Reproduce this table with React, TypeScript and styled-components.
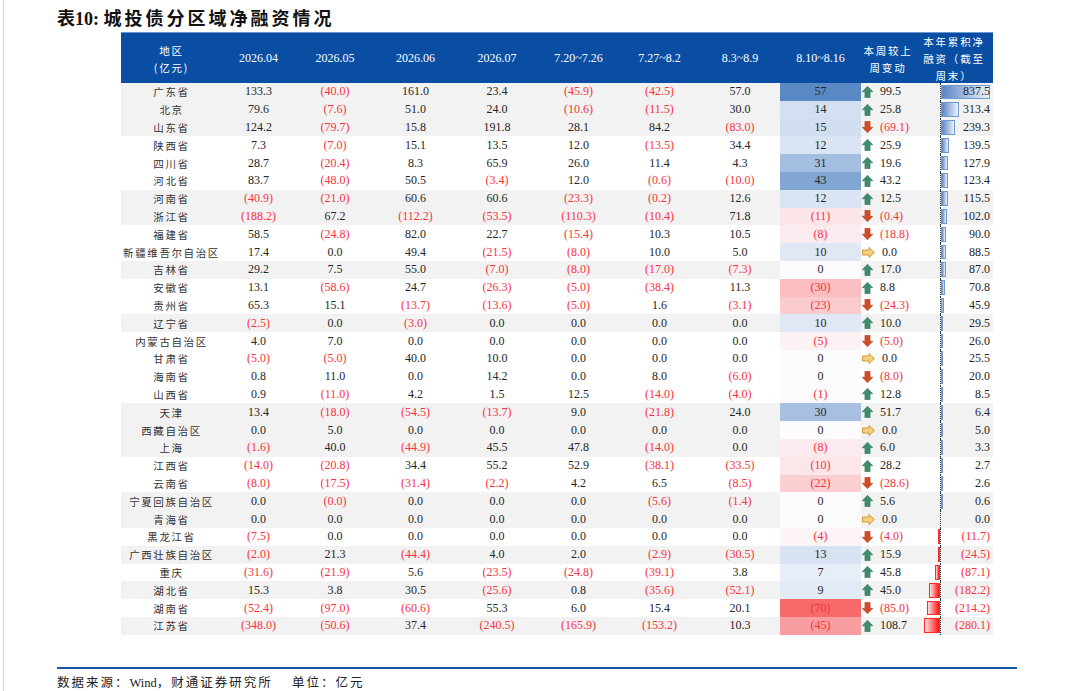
import styled, { createGlobalStyle } from "styled-components";

const GlobalStyle = createGlobalStyle`
  html, body {
    margin: 0;
    padding: 0;
    background: #ffffff;
  }
  body {
    font-family: "Liberation Serif", serif;
  }
`;

const CJK = `"Noto Sans CJK SC", "Liberation Serif", sans-serif`;
const COLS = "101px 73px 80px 81px 82px 81px 81px 80px 81px 54px 78px";

const Page = styled.div`
  width: 1077px;
  height: 691px;
  margin-left: 3px;
  border-left: 1px solid #d6d6d6;
  padding: 5px 0 0 53px;
  box-sizing: border-box;
`;
const Title = styled.h1`
  margin: 0 0 3px;
  height: 24px;
  line-height: 24px;
  font-size: 18px;
  font-weight: bold;
  color: #111111;
  font-family: "Liberation Serif", "Noto Sans CJK SC", serif;

  span {
    font-family: ${CJK};
    letter-spacing: 3px;
  }
`;
const Table = styled.div`
  margin-left: 64px;
  width: 872px;
`;
const HeadRow = styled.div`
  display: grid;
  grid-template-columns: ${COLS};
  height: 51px;
  background: #0a4ea3;
  border-top: 1px solid #6b97d2;
  box-sizing: border-box;
  color: #ffffff;
`;
const HeadCell = styled.div<{ $cjk?: boolean }>`
  display: flex;
  align-items: center;
  justify-content: center;
  text-align: center;
  line-height: 17px;
  font-family: ${(p) => (p.$cjk ? CJK : `"Liberation Serif", serif`)};
  font-size: ${(p) => (p.$cjk ? "10.5px" : "12px")};
  letter-spacing: ${(p) => (p.$cjk ? "1.8px" : "0")};
`;
const Row = styled.div<{ $shade: boolean }>`
  display: grid;
  grid-template-columns: ${COLS};
  height: 17.8px;
  background: ${(p) => (p.$shade ? "#f2f2f2" : "#ffffff")};
`;
const Cell = styled.div<{ $neg?: boolean }>`
  display: flex;
  align-items: center;
  justify-content: center;
  font-size: 12px;
  white-space: nowrap;
  color: ${(p) => (p.$neg ? "#f7323c" : "#262626")};
`;
const Region = styled(Cell)`
  font-family: ${CJK};
  font-size: 10.5px;
  letter-spacing: 1.6px;
  color: #333333;
`;
const ChangeCell = styled.div<{ $neg?: boolean }>`
  display: flex;
  align-items: center;
  gap: 7px;
  padding-left: 1px;
  font-size: 12px;
  white-space: nowrap;
  color: ${(p) => (p.$neg ? "#f7323c" : "#262626")};
`;
const CumCell = styled.div<{ $neg?: boolean }>`
  position: relative;
  display: flex;
  align-items: center;
  justify-content: flex-end;
  padding-right: 3px;
  font-size: 12px;
  color: ${(p) => (p.$neg ? "#f7323c" : "#262626")};

  &::before {
    content: "";
    position: absolute;
    left: 25px;
    top: 0;
    bottom: 0;
    border-left: 1px dotted #333333;
  }
  span {
    position: relative;
  }
`;
const Bar = styled.div<{ $neg: boolean }>`
  position: absolute;
  top: 1.5px;
  bottom: 1.5px;
  box-sizing: border-box;
  ${(p) =>
    p.$neg
      ? `right: 53px;
         background: linear-gradient(to right, #ffe3e3, #ff1010);
         border: 1px solid #ff2a2a;`
      : `left: 26px;
         background: linear-gradient(to right, #5a86c5, #edf2fa);
         border: 1px solid #7099d0;`}
`;
const Footer = styled.div`
  margin-top: 32px;
  width: 960px;
  border-top: 2px solid #1457a8;
  padding-top: 6px;
  font-family: "Liberation Serif", "Noto Sans CJK SC", serif;
  font-size: 12.5px;
  line-height: 14px;
  color: #222222;

  span {
    font-family: ${CJK};
    letter-spacing: 2px;
  }
`;

type Dir = "up" | "down" | "flat";
type RowData = [string, string[], string, string, Dir, string];

const rows: RowData[] = [
  ["广东省", ["133.3", "(40.0)", "161.0", "23.4", "(45.9)", "(42.5)", "57.0"], "57", "99.5", "up", "837.5"],
  ["北京", ["79.6", "(7.6)", "51.0", "24.0", "(10.6)", "(11.5)", "30.0"], "14", "25.8", "up", "313.4"],
  ["山东省", ["124.2", "(79.7)", "15.8", "191.8", "28.1", "84.2", "(83.0)"], "15", "(69.1)", "down", "239.3"],
  ["陕西省", ["7.3", "(7.0)", "15.1", "13.5", "12.0", "(13.5)", "34.4"], "12", "25.9", "up", "139.5"],
  ["四川省", ["28.7", "(20.4)", "8.3", "65.9", "26.0", "11.4", "4.3"], "31", "19.6", "up", "127.9"],
  ["河北省", ["83.7", "(48.0)", "50.5", "(3.4)", "12.0", "(0.6)", "(10.0)"], "43", "43.2", "up", "123.4"],
  ["河南省", ["(40.9)", "(21.0)", "60.6", "60.6", "(23.3)", "(0.2)", "12.6"], "12", "12.5", "up", "115.5"],
  ["浙江省", ["(188.2)", "67.2", "(112.2)", "(53.5)", "(110.3)", "(10.4)", "71.8"], "(11)", "(0.4)", "down", "102.0"],
  ["福建省", ["58.5", "(24.8)", "82.0", "22.7", "(15.4)", "10.3", "10.5"], "(8)", "(18.8)", "down", "90.0"],
  ["新疆维吾尔自治区", ["17.4", "0.0", "49.4", "(21.5)", "(8.0)", "10.0", "5.0"], "10", "0.0", "flat", "88.5"],
  ["吉林省", ["29.2", "7.5", "55.0", "(7.0)", "(8.0)", "(17.0)", "(7.3)"], "0", "17.0", "up", "87.0"],
  ["安徽省", ["13.1", "(58.6)", "24.7", "(26.3)", "(5.0)", "(38.4)", "11.3"], "(30)", "8.8", "up", "70.8"],
  ["贵州省", ["65.3", "15.1", "(13.7)", "(13.6)", "(5.0)", "1.6", "(3.1)"], "(23)", "(24.3)", "down", "45.9"],
  ["辽宁省", ["(2.5)", "0.0", "(3.0)", "0.0", "0.0", "0.0", "0.0"], "10", "10.0", "up", "29.5"],
  ["内蒙古自治区", ["4.0", "7.0", "0.0", "0.0", "0.0", "0.0", "0.0"], "(5)", "(5.0)", "down", "26.0"],
  ["甘肃省", ["(5.0)", "(5.0)", "40.0", "10.0", "0.0", "0.0", "0.0"], "0", "0.0", "flat", "25.5"],
  ["海南省", ["0.8", "11.0", "0.0", "14.2", "0.0", "8.0", "(6.0)"], "0", "(8.0)", "down", "20.0"],
  ["山西省", ["0.9", "(11.0)", "4.2", "1.5", "12.5", "(14.0)", "(4.0)"], "(1)", "12.8", "up", "8.5"],
  ["天津", ["13.4", "(18.0)", "(54.5)", "(13.7)", "9.0", "(21.8)", "24.0"], "30", "51.7", "up", "6.4"],
  ["西藏自治区", ["0.0", "5.0", "0.0", "0.0", "0.0", "0.0", "0.0"], "0", "0.0", "flat", "5.0"],
  ["上海", ["(1.6)", "40.0", "(44.9)", "45.5", "47.8", "(14.0)", "0.0"], "(8)", "6.0", "up", "3.3"],
  ["江西省", ["(14.0)", "(20.8)", "34.4", "55.2", "52.9", "(38.1)", "(33.5)"], "(10)", "28.2", "up", "2.7"],
  ["云南省", ["(8.0)", "(17.5)", "(31.4)", "(2.2)", "4.2", "6.5", "(8.5)"], "(22)", "(28.6)", "down", "2.6"],
  ["宁夏回族自治区", ["0.0", "(0.0)", "0.0", "0.0", "0.0", "(5.6)", "(1.4)"], "0", "5.6", "up", "0.6"],
  ["青海省", ["0.0", "0.0", "0.0", "0.0", "0.0", "0.0", "0.0"], "0", "0.0", "flat", "0.0"],
  ["黑龙江省", ["(7.5)", "0.0", "0.0", "0.0", "0.0", "0.0", "0.0"], "(4)", "(4.0)", "down", "(11.7)"],
  ["广西壮族自治区", ["(2.0)", "21.3", "(44.4)", "4.0", "2.0", "(2.9)", "(30.5)"], "13", "15.9", "up", "(24.5)"],
  ["重庆", ["(31.6)", "(21.9)", "5.6", "(23.5)", "(24.8)", "(39.1)", "3.8"], "7", "45.8", "up", "(87.1)"],
  ["湖北省", ["15.3", "3.8", "30.5", "(25.6)", "0.8", "(35.6)", "(52.1)"], "9", "45.0", "up", "(182.2)"],
  ["湖南省", ["(52.4)", "(97.0)", "(60.6)", "55.3", "6.0", "15.4", "20.1"], "(70)", "(85.0)", "down", "(214.2)"],
  ["江苏省", ["(348.0)", "(50.6)", "37.4", "(240.5)", "(165.9)", "(153.2)", "10.3"], "(45)", "108.7", "up", "(280.1)"],
];

const SHADE = "GGGWWWGGWWGWWGWWWWGGGWWGGWGWGWG";

const isNeg = (s: string) => s.startsWith("(");
const toNum = (s: string) => (isNeg(s) ? -parseFloat(s.slice(1, -1)) : parseFloat(s));

const mix = (a: number[], b: number[], t: number) =>
  `rgb(${a.map((v, i) => Math.round(v + (b[i] - v) * t)).join(",")})`;

const heatColor = (v: number) => {
  const white = [252, 252, 255];
  if (v >= 0) return mix(white, [90, 138, 198], Math.min(v / 57, 1));
  return mix(white, [248, 105, 107], Math.min(-v / 70, 1));
};

const BAR_SCALE = 49 / 837.5;

function Arrow({ dir }: { dir: Dir }) {
  if (dir === "flat") {
    return (
      <svg width="13" height="11" viewBox="0 0 13 11">
        <path
          d="M12.4 5.5 L7 0.5 L7 3 L0.6 3 L0.6 8 L7 8 L7 10.5 Z"
          fill="#f2cf80"
          stroke="#d39a32"
          strokeWidth="1"
          strokeLinejoin="round"
        />
      </svg>
    );
  }
  const up = dir === "up";
  return (
    <svg width="11" height="12" viewBox="0 0 11 12" style={up ? undefined : { transform: "rotate(180deg)" }}>
      <path
        d="M5.5 0.2 L10.9 5.8 L8.1 5.8 L8.1 11.8 L2.9 11.8 L2.9 5.8 L0.1 5.8 Z"
        fill={up ? "#3f8c6c" : "#d04c27"}
        stroke={up ? "#2e7456" : "#b23a18"}
        strokeWidth="0.5"
        strokeLinejoin="round"
      />
    </svg>
  );
}

const headers = ["2026.04", "2026.05", "2026.06", "2026.07", "7.20~7.26", "7.27~8.2", "8.3~8.9", "8.10~8.16"];

export default function App() {
  return (
    <>
      <GlobalStyle />
      <Page>
        <Title>
          表10: <span>城投债分区域净融资情况</span>
        </Title>
        <Table>
          <HeadRow>
            <HeadCell $cjk>
              地区
              <br />
              (亿元)
            </HeadCell>
            {headers.map((h) => (
              <HeadCell key={h}>{h}</HeadCell>
            ))}
            <HeadCell $cjk>
              本周较上
              <br />
              周变动
            </HeadCell>
            <HeadCell $cjk>
              本年累积净
              <br />
              融资（截至
              <br />
              周末）
            </HeadCell>
          </HeadRow>
          {rows.map(([name, vals, heat, change, dir, cum], i) => {
            const cumV = toNum(cum);
            return (
              <Row key={name} $shade={SHADE[i] === "G"}>
                <Region>{name}</Region>
                {vals.map((v, j) => (
                  <Cell key={j} $neg={isNeg(v)}>
                    {v}
                  </Cell>
                ))}
                <Cell $neg={isNeg(heat)} style={{ background: heatColor(toNum(heat)) }}>
                  {heat}
                </Cell>
                <ChangeCell $neg={isNeg(change)}>
                  <Arrow dir={dir} />
                  {change}
                </ChangeCell>
                <CumCell $neg={isNeg(cum)}>
                  {cumV !== 0 && <Bar $neg={cumV < 0} style={{ width: Math.max(Math.abs(cumV) * BAR_SCALE, 2) }} />}
                  <span>{cum}</span>
                </CumCell>
              </Row>
            );
          })}
        </Table>
        <Footer>
          <span>数据来源：</span>Wind<span>，财通证券研究所　 单位：亿元</span>
        </Footer>
      </Page>
    </>
  );
}
